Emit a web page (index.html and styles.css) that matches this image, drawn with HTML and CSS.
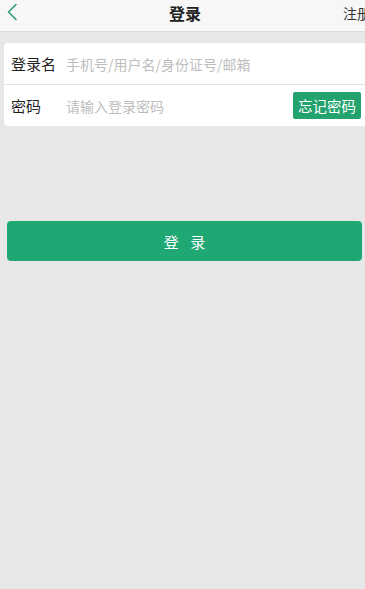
FILE: index.html
```html
<!DOCTYPE html>
<html lang="zh">
<head>
<meta charset="utf-8">
<title>登录</title>
<link rel="stylesheet" href="styles.css">
</head>
<body>
<div class="page">
  <header class="topbar">
    <div class="back">
      <svg width="12" height="18" viewBox="0 0 12 18"><polyline points="10,1.5 2.5,9 10,16.5" fill="none" stroke="#2f9a72" stroke-width="1.6" stroke-linecap="round" stroke-linejoin="round"/></svg>
    </div>
    <div class="title">登录</div>
    <div class="reg">注册</div>
  </header>
  <section class="card">
    <div class="row">
      <span class="label">登录名</span>
      <span class="ph">手机号/用户名/身份证号/邮箱</span>
    </div>
    <div class="row">
      <span class="label">密码</span>
      <span class="ph">请输入登录密码</span>
      <span class="forgot">忘记密码</span>
    </div>
  </section>
  <div class="btnwrap">
    <div class="login">登 录</div>
  </div>
</div>
</body>
</html>
```
FILE: styles.css
```css
html, body {
  margin: 0;
  padding: 0;
  height: 100%;
  overflow: hidden;
}
body {
  background: #e7e7e7;
  font-family: "Noto Sans CJK SC", "Noto Sans", sans-serif;
  color: #222;
}
.page {
  width: 365px;
  overflow: hidden;
}
.topbar {
  height: 31px;
  background: #f7f7f7;
  border-bottom: 1px solid #dcdcdc;
  display: grid;
  grid-template-columns: 1fr auto 1fr;
  align-items: center;
}
.back {
  padding-left: 6px;
  display: flex;
  align-items: center;
  height: 26px;
  margin-top: -8px;
}
.title {
  font-size: 16px;
  font-weight: 700;
  color: #222;
  margin-top: -6px;
  padding-left: 5px;
}
.reg {
  justify-self: end;
  font-size: 14px;
  color: #333;
  white-space: nowrap;
  margin-right: -6px;
  margin-top: -6px;
}
.card {
  margin: 11px 0 0 4px;
  background: #fff;
  border-radius: 4px 0 0 4px;
}
.row {
  height: 41px;
  display: flex;
  align-items: center;
  padding-left: 7px;
}
.row + .row {
  border-top: 1px solid #e4e4e4;
}
.label {
  width: 55px;
  font-size: 15px;
  color: #1e1e1e;
}
.ph {
  flex: 1;
  font-size: 14px;
  color: #bdbdbd;
}
.forgot {
  background: #22a26c;
  color: #fff;
  font-size: 14.5px;
  height: 27px;
  line-height: 27px;
  padding: 0 5px;
  border-radius: 2px;
  margin-right: 4px;
}
.btnwrap {
  padding: 95px 3px 0 7px;
}
.login {
  height: 40px;
  background: #1fa873;
  border-radius: 4px;
  color: #fff;
  font-size: 15px;
  letter-spacing: 4px;
  text-indent: 4px;
  display: flex;
  align-items: center;
  justify-content: center;
}
```
